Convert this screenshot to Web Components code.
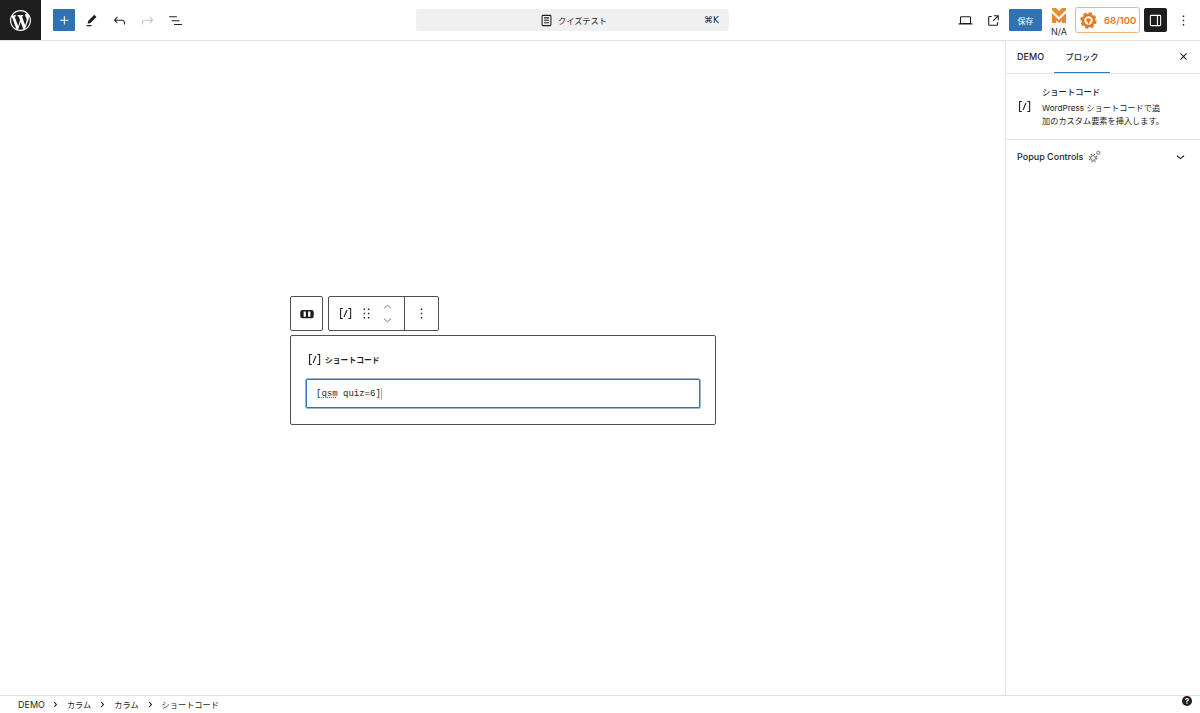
<!DOCTYPE html>
<html lang="ja">
<head>
<meta charset="utf-8">
<title>クイズテスト</title>
<style>
  html, body { margin: 0; height: 100%; background: #fff; overflow: hidden; }
  body {
    font-family: "Inter", "Noto Sans CJK JP", sans-serif;
    color: #1e1e1e;
    --accent: #3072b4;
    --outline: #4f4f4f;
  }
</style>
</head>
<body>
<editor-app></editor-app>

<script>
const ICONS = {
  wp: ["0 0 20 20", "M20 10c0-5.51-4.49-10-10-10C4.48 0 0 4.49 0 10c0 5.52 4.48 10 10 10 5.51 0 10-4.48 10-10zM7.78 15.37L4.37 6.22c.55-.02 1.17-.08 1.17-.08.5-.06.44-1.13-.06-1.11 0 0-1.45.11-2.37.11-.18 0-.37 0-.58-.01C4.12 2.69 6.87 1.11 10 1.11c2.33 0 4.45.87 6.05 2.34-.68-.11-1.65.39-1.65 1.58 0 .74.45 1.36.9 2.1.35.61.55 1.36.55 2.46 0 1.49-1.4 5-1.4 5l-3.03-8.37c.54-.02.82-.17.82-.17.5-.05.44-1.25-.06-1.22 0 0-1.44.12-2.38.12-.87 0-2.33-.12-2.33-.12-.5-.03-.56 1.2-.06 1.22l.92.08 1.26 3.41zM17.41 10c.24-.64.74-1.87.43-4.25.7 1.29 1.05 2.71 1.05 4.25 0 3.29-1.73 6.24-4.4 7.78.97-2.59 1.94-5.2 2.92-7.78zM6.1 18.09C3.12 16.65 1.11 13.53 1.11 10c0-1.3.23-2.48.72-3.59C3.25 10.3 4.67 14.2 6.1 18.09zm4.03-6.63l2.58 6.98c-.86.29-1.76.45-2.71.45-.79 0-1.57-.11-2.29-.33.81-2.38 1.62-4.74 2.42-7.1z"],
  plus: ["0 0 24 24", "M11 12.5V17.5H12.5V12.5H17.5V11H12.5V6H11V11H6V12.5H11Z"],
  pencil: ["0 0 24 24", "m19 7-3-3-8.5 8.5-1 4 4-1L19 7Zm-7 11.5H5V20h7v-1.5Z"],
  undo: ["0 0 24 24", "M18.3 11.7c-.6-.6-1.4-.9-2.3-.9H6.7l2.9-3.3-1.1-1-4.5 5L8.5 16l1-1-2.7-2.7H16c.5 0 .9.2 1.3.5 1 1 1 3.4 1 4.5v.3h1.5v-.2c0-1.5 0-4.3-1.5-5.7z"],
  redo: ["0 0 24 24", "M15.6 6.5l-1.1 1 2.9 3.3H8c-.9 0-1.7.3-2.3.9-1.4 1.5-1.4 4.2-1.4 5.6v.2h1.5v-.3c0-1.1 0-3.5 1-4.5.3-.3.7-.5 1.3-.5h9.2L14.5 15l1.1 1.1 4.6-4.6-4.6-5z"],
  list: ["0 0 24 24", "M3 6h11v1.5H3V6Zm3.5 5.5h11V13h-11v-1.5ZM21 17H10v1.5h11V17Z"],
  page: ["0 0 24 24", "M15.5 7.5h-7V9h7V7.5Zm-7 3.5h7v1.5h-7V11Zm7 3.5h-7V16h7v-1.5ZM17 4H7a2 2 0 0 0-2 2v12a2 2 0 0 0 2 2h10a2 2 0 0 0 2-2V6a2 2 0 0 0-2-2Zm.5 14a.5.5 0 0 1-.5.5H7a.5.5 0 0 1-.5-.5V6a.5.5 0 0 1 .5-.5h10a.5.5 0 0 1 .5.5v12Z"],
  laptop: ["0 0 24 24", "M20.5 16h-.7V8c0-1.1-.9-2-2-2H6.2c-1.1 0-2 .9-2 2v8h-.7c-.8 0-1.5.7-1.5 1.5h20c0-.8-.7-1.5-1.5-1.5zM5.7 8c0-.3.2-.5.5-.5h11.6c.3 0 .5.2.5.5v7.6H5.7V8z"],
  external: ["0 0 24 24", "M19.5 4.5h-7V6h4.44l-5.97 5.97 1.06 1.06L18 7.06v4.44h1.5v-7Zm-13 1a2 2 0 0 0-2 2v10a2 2 0 0 0 2 2h10a2 2 0 0 0 2-2v-3H17v3a.5.5 0 0 1-.5.5h-10a.5.5 0 0 1-.5-.5v-10a.5.5 0 0 1 .5-.5h3V5.5h-3Z"],
  sidebar: ["0 0 24 24", "M18 4H6c-1.1 0-2 .9-2 2v12c0 1.1.9 2 2 2h12c1.1 0 2-.9 2-2V6c0-1.1-.9-2-2-2zm-4 14.5H6c-.3 0-.5-.2-.5-.5V6c0-.3.2-.5.5-.5h8v13zm4.5-.5c0 .3-.2.5-.5.5h-2.5v-13H18c.3 0 .5.2.5.5v12z"],
  more: ["0 0 24 24", "M13 19h-2v-2h2v2zm0-6h-2v-2h2v2zm0-6h-2V5h2v2z"],
  close: ["0 0 24 24", "M12 13.06l3.712 3.713 1.061-1.06L13.061 12l3.712-3.712-1.06-1.06L12 10.938 8.288 7.227l-1.061 1.06L10.939 12l-3.712 3.712 1.06 1.061L12 13.061z"],
  down: ["0 0 24 24", "M17.5 11.6L12 16l-5.5-4.4.9-1.2L12 14l4.5-3.6 1 1.2z"],
  up: ["0 0 24 24", "M6.5 12.4L12 8l5.5 4.4-.9 1.2L12 10l-4.5 3.6-1-1.2z"],
  crumb: ["0 0 24 24", "M10.8622 8.04053L14.2805 12.0286L10.8622 16.0167L9.72327 15.0405L12.3049 12.0286L9.72327 9.01672L10.8622 8.04053Z"],
  shortcode: ["0 0 24 24", "M16 4.2v1.5h2.5v12.5H16v1.5h4V4.2h-4zM4.2 19.8h4v-1.5H5.8V5.8h2.5V4.2h-4l-.1 15.6zm5.1-3.1l1.4.6 4-10-1.4-.6-4 10z"],
  drag: ["0 0 24 24", "M8 7h2V5H8v2zm0 6h2v-2H8v2zm0 6h2v-2H8v2zm6-14v2h2V5h-2zm0 8h2v-2h-2v2zm0 6h2v-2h-2v2z"],
  columns: ["0 0 24 24", "M6 6.5h12a3 3 0 0 1 3 3v5a3 3 0 0 1-3 3H6a3 3 0 0 1-3-3v-5a3 3 0 0 1 3-3ZM7.5 8.5v7h3v-7ZM13.5 8.5v7h3v-7Z"]
};

class WpIcon extends HTMLElement {
  constructor() {
    super();
    this.attachShadow({ mode: "open" });
  }

  connectedCallback() {
    const [box, d] = ICONS[this.getAttribute("name")];
    const size = this.getAttribute("size") || 17;
    this.shadowRoot.innerHTML = /* html */`
    <style>
      :host { display: inline-flex; flex: none; color: inherit; }
      svg { display: block; fill: currentColor; fill-rule: evenodd; }
    </style>
    <svg width="${size}" height="${size}" viewBox="${box}"><path d="${d}"/></svg>`;
  }
}

class EditorHeader extends HTMLElement {
  constructor() {
    super();
    this.attachShadow({ mode: "open" });
  }

  static get styles() {
    return /* css */`
      :host {
        display: flex;
        align-items: center;
        height: 41px;
        box-sizing: border-box;
        border-bottom: 1px solid #e3e3e3;
        background: #fff;
        flex: none;
      }

      .logo {
        width: 41px;
        height: 40px;
        background: #1e1e1e;
        color: #fff;
        display: flex;
        align-items: center;
        justify-content: center;
        flex: none;
      }

      .left {
        display: flex;
        align-items: center;
        width: 375px;
        box-sizing: border-box;
        padding-left: 12px;
        flex: none;
      }

      .add {
        width: 22px;
        height: 22px;
        background: var(--accent);
        border-radius: 1px;
        color: #fff;
        display: flex;
        align-items: center;
        justify-content: center;
        margin-right: 2px;
      }

      .tool {
        width: 28px;
        display: flex;
        justify-content: center;
      }

      .redo { color: #c4c4c4; }

      .command {
        width: 313px;
        height: 22px;
        background: #f0f0f0;
        border-radius: 3px;
        display: flex;
        align-items: center;
        justify-content: center;
        position: relative;
        font-size: 8.2px;
        gap: 3px;
        flex: none;
      }

      .shortcut {
        position: absolute;
        right: 10px;
        top: 5px;
        font-size: 9px;
        line-height: 12px;
        font-family: "DejaVu Sans", sans-serif;
      }

      .right {
        margin-left: auto;
        display: flex;
        align-items: center;
        padding-right: 8px;
      }

      .icon-btn {
        width: 28px;
        display: flex;
        justify-content: center;
      }

      .save {
        width: 33px;
        height: 22px;
        margin-left: 2px;
        background: var(--accent);
        border-radius: 1px;
        color: #fff;
        font-size: 8px;
        display: flex;
        align-items: center;
        justify-content: center;
      }

      .seo {
        width: 16px;
        height: 40px;
        box-sizing: border-box;
        padding-top: 7px;
        margin-left: 9px;
        display: flex;
        flex-direction: column;
        align-items: center;
      }

      .seo svg { display: block; flex: none; }

      .seo span {
        margin-top: 2px;
        font-size: 9px;
        line-height: 11px;
        color: #2c2c2c;
        white-space: nowrap;
      }

      .score {
        width: 65px;
        height: 26px;
        box-sizing: border-box;
        margin-left: 8px;
        border: 1px solid #eeb27c;
        border-radius: 3px;
        display: flex;
        align-items: center;
        padding-left: 4px;
        gap: 7px;
        color: #e4761b;
        font-size: 9.5px;
        font-weight: 600;
      }

      .score svg { display: block; flex: none; }

      .toggle {
        width: 23px;
        height: 24px;
        margin-left: 4px;
        background: #1e1e1e;
        color: #fff;
        border-radius: 2px;
        display: flex;
        align-items: center;
        justify-content: center;
      }

      .more {
        width: 18px;
        margin-left: 7px;
        display: flex;
        justify-content: center;
      }
    `;
  }

  connectedCallback() {
    this.shadowRoot.innerHTML = /* html */`
    <style>${EditorHeader.styles}</style>
    <div class="logo"><wp-icon name="wp" size="21"></wp-icon></div>
    <div class="left">
      <div class="add"><wp-icon name="plus" size="17"></wp-icon></div>
      <div class="tool"><wp-icon name="pencil"></wp-icon></div>
      <div class="tool"><wp-icon name="undo"></wp-icon></div>
      <div class="tool redo"><wp-icon name="redo"></wp-icon></div>
      <div class="tool"><wp-icon name="list"></wp-icon></div>
    </div>
    <div class="command">
      <wp-icon name="page"></wp-icon>
      <span>クイズテスト</span>
      <span class="shortcut">⌘K</span>
    </div>
    <div class="right">
      <div class="icon-btn"><wp-icon name="laptop"></wp-icon></div>
      <div class="icon-btn"><wp-icon name="external"></wp-icon></div>
      <div class="save">保存</div>
      <div class="seo">
        <svg width="16" height="17" viewBox="0 0 16 17" fill="#e8892f">
          <polygon points="1,1 5,1 8,4 11,1 15,1 15,3 8,10 1,3"/>
          <polygon points="1,6 8,13 15,6 15,16 11,16 11,13.5 8,16 5,13.5 5,16 1,16"/>
        </svg>
        <span>N/A</span>
      </div>
      <div class="score">
        <svg width="17" height="17" viewBox="0 0 17 17">
          <circle cx="8.5" cy="8.5" r="6.8" fill="#e4761b"/>
          <circle cx="8.5" cy="8.5" r="7.4" fill="none" stroke="#e4761b" stroke-width="1.6" stroke-dasharray="3.6 2.21"/>
          <circle cx="8.5" cy="8.5" r="4.2" fill="#fff"/>
          <path d="M6.4 6.6h4.2v1.4c0 1.3-.8 2.1-1.6 2.3v1.5H8v-1.5c-.8-.2-1.6-1-1.6-2.3z" fill="#e4761b"/>
        </svg>
        <span>68/100</span>
      </div>
      <div class="toggle"><wp-icon name="sidebar"></wp-icon></div>
      <div class="more"><wp-icon name="more"></wp-icon></div>
    </div>`;
  }
}

class BlockToolbar extends HTMLElement {
  constructor() {
    super();
    this.attachShadow({ mode: "open" });
  }

  static get styles() {
    return /* css */`
      :host {
        display: flex;
        gap: 5px;
        height: 35px;
      }

      .group {
        display: flex;
        align-items: center;
        box-sizing: border-box;
        border: 1px solid var(--outline);
        border-radius: 2px;
        background: #fff;
      }

      .first { width: 33px; justify-content: center; }

      .second { width: 111px; }

      .code { margin-left: 8px; width: 17px; }

      .drag { margin-left: 4px; width: 17px; }

      .mover {
        margin-left: 4px;
        width: 17px;
        display: flex;
        flex-direction: column;
        color: #a0a0a0;
      }

      .mover wp-icon { height: 12px; align-items: center; overflow: hidden; }

      .divider {
        margin-left: 8px;
        width: 1px;
        align-self: stretch;
        background: var(--outline);
      }

      .more { flex: 1; display: flex; justify-content: center; }
    `;
  }

  connectedCallback() {
    this.shadowRoot.innerHTML = /* html */`
    <style>${BlockToolbar.styles}</style>
    <div class="group first"><wp-icon name="columns" size="18"></wp-icon></div>
    <div class="group second">
      <wp-icon class="code" name="shortcode"></wp-icon>
      <wp-icon class="drag" name="drag"></wp-icon>
      <div class="mover"><wp-icon name="up"></wp-icon><wp-icon name="down"></wp-icon></div>
      <div class="divider"></div>
      <div class="more"><wp-icon name="more"></wp-icon></div>
    </div>`;
  }
}

class ShortcodeBlock extends HTMLElement {
  constructor() {
    super();
    this.attachShadow({ mode: "open" });
  }

  static get styles() {
    return /* css */`
      :host {
        display: block;
        width: 426px;
        height: 90px;
        box-sizing: border-box;
        margin-top: 4px;
        padding: 15px 15px 0;
        border: 1px solid var(--outline);
        border-radius: 2px;
        background: #fff;
      }

      .label {
        display: flex;
        align-items: center;
        gap: 2px;
        height: 17px;
        font-size: 7.8px;
        font-weight: 700;
      }

      .input {
        margin-top: 11px;
        height: 29px;
        box-sizing: border-box;
        display: flex;
        align-items: center;
        padding-left: 9px;
        border: 1px solid var(--accent);
        box-shadow: 0 0 0 .5px var(--accent);
        border-radius: 1px;
        font-family: "Liberation Mono", monospace;
        font-size: 9px;
        white-space: pre;
      }

      .typo {
        text-decoration: underline dotted #d63638 1px;
        text-underline-offset: 1px;
      }

      .caret {
        width: 1px;
        height: 12px;
        background: #b0b0b0;
      }
    `;
  }

  connectedCallback() {
    this.shadowRoot.innerHTML = /* html */`
    <style>${ShortcodeBlock.styles}</style>
    <div class="label"><wp-icon name="shortcode"></wp-icon><span>ショートコード</span></div>
    <div class="input"><span>[<span class="typo">qsm</span> quiz=6]</span><span class="caret"></span></div>`;
  }
}

class EditorCanvas extends HTMLElement {
  constructor() {
    super();
    this.attachShadow({ mode: "open" });
  }

  connectedCallback() {
    this.shadowRoot.innerHTML = /* html */`
    <style>
      :host {
        display: flex;
        flex-direction: column;
        flex: 1;
        min-width: 0;
        box-sizing: border-box;
        padding: 255px 0 0 290px;
      }
    </style>
    <block-toolbar></block-toolbar>
    <shortcode-block></shortcode-block>`;
  }
}

class EditorSidebar extends HTMLElement {
  constructor() {
    super();
    this.attachShadow({ mode: "open" });
  }

  static get styles() {
    return /* css */`
      :host {
        display: block;
        width: 195px;
        box-sizing: border-box;
        border-left: 1px solid #e3e3e3;
        flex: none;
        font-size: 8.3px;
      }

      .tabs {
        height: 33px;
        box-sizing: border-box;
        display: flex;
        align-items: center;
        border-bottom: 1px solid #e3e3e3;
        padding: 0 0 1px 11px;
      }

      .tab {
        font-size: 9px;
        font-weight: 500;
        width: 37px;
      }

      .tab.active {
        width: 56px;
        height: 32px;
        box-sizing: border-box;
        padding-bottom: 1px;
        display: flex;
        align-items: center;
        justify-content: center;
        font-size: 8.3px;
        position: relative;
        top: .5px;
        border-bottom: 1.5px solid var(--accent);
      }

      .close { margin-left: auto; margin-right: 8px; }

      .card {
        height: 66px;
        box-sizing: border-box;
        display: flex;
        border-bottom: 1px solid #e3e3e3;
        padding: 12px 0 0 10px;
        gap: 9px;
      }

      .card wp-icon { margin-top: 12px; }

      .card h2 {
        margin: 0;
        font-size: 8.3px;
        line-height: 13px;
        font-weight: 500;
      }

      .card p {
        margin: 3px 0 0;
        width: 124px;
        font-size: 8.2px;
        line-height: 13px;
      }

      .panel {
        height: 34px;
        box-sizing: border-box;
        padding: 0 11px 1px 11px;
        display: flex;
        align-items: center;
        font-size: 9px;
        font-weight: 500;
        gap: 5px;
      }

      .panel svg { display: block; flex: none; }

      .panel wp-icon { margin-left: auto; }
    `;
  }

  connectedCallback() {
    this.shadowRoot.innerHTML = /* html */`
    <style>${EditorSidebar.styles}</style>
    <div class="tabs">
      <span class="tab">DEMO</span>
      <span class="tab active">ブロック</span>
      <wp-icon class="close" name="close"></wp-icon>
    </div>
    <div class="card">
      <wp-icon name="shortcode"></wp-icon>
      <div>
        <h2>ショートコード</h2>
        <p>WordPress ショートコードで追加のカスタム要素を挿入します。</p>
      </div>
    </div>
    <div class="panel">
      <span>Popup Controls</span>
      <svg width="13" height="13" viewBox="0 0 13 13" fill="none" stroke="#666">
        <circle cx="5" cy="8" r="2.4" stroke-width="1"/>
        <circle cx="5" cy="8" r="3.8" stroke-width="1.1" stroke-dasharray="1.5 1.5"/>
        <circle cx="10.3" cy="2.8" r="1.6" stroke-width=".9"/>
      </svg>
      <wp-icon name="down" size="17"></wp-icon>
    </div>`;
  }
}

class EditorFooter extends HTMLElement {
  constructor() {
    super();
    this.attachShadow({ mode: "open" });
  }

  static get styles() {
    return /* css */`
      :host {
        display: flex;
        align-items: center;
        height: 18px;
        box-sizing: border-box;
        flex: none;
        border-top: 1px solid #e0e0e0;
        padding: 0 0 1px 18px;
        font-size: 8.2px;
        position: relative;
      }

      .item { display: flex; align-items: center; }

      .item wp-icon { margin: 0 3px; }

      .demo { font-size: 9px; margin-right: -1px; }

      .help {
        position: absolute;
        right: 8px;
        top: 0;
        width: 10px;
        height: 10px;
        border-radius: 50%;
        background: #1e1e1e;
        color: #fff;
        font-size: 8px;
        font-weight: 700;
        line-height: 10px;
        text-align: center;
      }
    `;
  }

  connectedCallback() {
    this.shadowRoot.innerHTML = /* html */`
    <style>${EditorFooter.styles}</style>
    <span class="demo">DEMO</span>
    <span class="item"><wp-icon name="crumb"></wp-icon>カラム</span>
    <span class="item"><wp-icon name="crumb"></wp-icon>カラム</span>
    <span class="item"><wp-icon name="crumb"></wp-icon>ショートコード</span>
    <span class="help">?</span>`;
  }
}

class EditorApp extends HTMLElement {
  constructor() {
    super();
    this.attachShadow({ mode: "open" });
  }

  connectedCallback() {
    this.shadowRoot.innerHTML = /* html */`
    <style>
      :host {
        display: flex;
        flex-direction: column;
        height: 100vh;
      }

      .main {
        flex: 1;
        min-height: 0;
        display: flex;
      }
    </style>
    <editor-header></editor-header>
    <div class="main">
      <editor-canvas></editor-canvas>
      <editor-sidebar></editor-sidebar>
    </div>
    <editor-footer></editor-footer>`;
  }
}

customElements.define("wp-icon", WpIcon);
customElements.define("editor-header", EditorHeader);
customElements.define("block-toolbar", BlockToolbar);
customElements.define("shortcode-block", ShortcodeBlock);
customElements.define("editor-canvas", EditorCanvas);
customElements.define("editor-sidebar", EditorSidebar);
customElements.define("editor-footer", EditorFooter);
customElements.define("editor-app", EditorApp);
</script>
</body>
</html>
